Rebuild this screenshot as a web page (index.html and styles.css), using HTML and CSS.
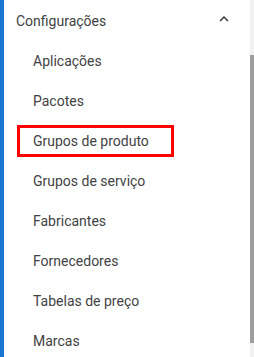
FILE: index.html
```html
<!doctype html>
<html lang="pt">
  <head>
    <meta charset="UTF-8" />
    <title>Configurações</title>
    <link rel="stylesheet" href="styles.css">
  </head>
  <body>
    <div class="sidebar">
      <div class="accent"></div>
      <nav class="menu">
        <div class="menu-header">
          <span class="menu-title">Configurações</span>
          <svg class="chevron" viewBox="0 0 24 24" width="18" height="18">
            <path d="M12 8l-6 6 1.41 1.41L12 10.83l4.59 4.58L18 14z" fill="#333" />
          </svg>
        </div>
        <a class="menu-item">Aplicações</a>
        <a class="menu-item">Pacotes</a>
        <a class="menu-item marked">Grupos de produto<span class="mark"></span></a>
        <a class="menu-item">Grupos de serviço</a>
        <a class="menu-item">Fabricantes</a>
        <a class="menu-item">Fornecedores</a>
        <a class="menu-item">Tabelas de preço</a>
        <a class="menu-item">Marcas</a>
      </nav>
      <div class="scrollbar">
        <div class="thumb"></div>
      </div>
    </div>
  </body>
</html>
```

FILE: styles.css
```css
body {
  margin: 0;
  background: #fff;
  font-family: Roboto, "Liberation Sans", sans-serif;
}
.sidebar {
  display: flex;
  height: 357px;
  overflow: hidden;
}
.accent {
  width: 4px;
  background: #1976d2;
  flex-shrink: 0;
}
.menu {
  flex: 1;
  display: flex;
  flex-direction: column;
}
.menu-header {
  height: 41px;
  display: flex;
  align-items: center;
  padding-left: 12px;
  position: relative;
  flex-shrink: 0;
}
.menu-title {
  font-size: 14px;
  color: #424242;
}
.chevron {
  position: absolute;
  left: 211px;
  top: 10px;
}
.menu-item {
  height: 40px;
  line-height: 40px;
  padding-left: 29px;
  font-size: 14px;
  color: #424242;
  position: relative;
  flex-shrink: 0;
}
.mark {
  position: absolute;
  left: 13px;
  top: 4px;
  width: 157px;
  height: 32px;
  box-sizing: border-box;
  border: 3px solid #f00;
}
.scrollbar {
  width: 4px;
  flex-shrink: 0;
  background: #f1f1f1;
}
.thumb {
  margin-top: 55px;
  height: 288px;
  background: #9e9e9e;
}
```
